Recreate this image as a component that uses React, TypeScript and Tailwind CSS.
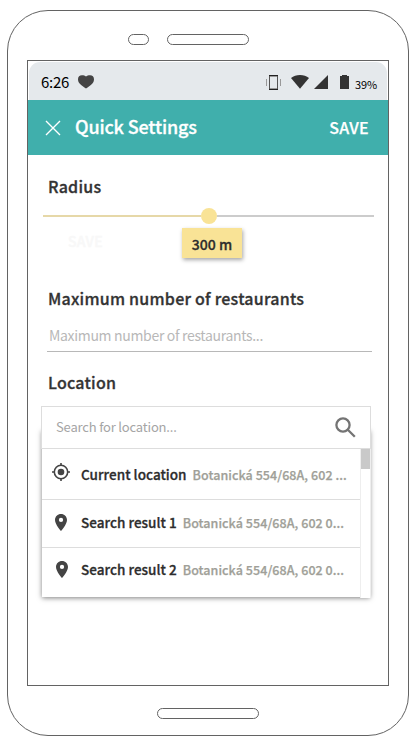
import type { ReactNode } from "react";

function Heart() {
  return (
    <svg className="block h-[14px] w-4" viewBox="0 0 16 14" fill="#444">
      <path d="M8 13.400C6 12.400 3.500 10.800 1.600 8.600.4 7.100 0 5.700 0 4.200 0 1.800 1.600.2 3.900.2 5.700.2 7 .7 8 1.500 9 .7 10.300.2 12.100.2 14.400.2 16 1.800 16 4.200c0 1.500-.4 2.900-1.600 4.400C12.500 10.800 10 12.400 8 13.400Z" />
    </svg>
  );
}

function StatusBar() {
  return (
    <div className="mx-px mt-px flex h-[38px] shrink-0 rounded-t-[11px] bg-[#e5e9ec] text-black">
      <span className="ml-3 mt-2 w-[37px] text-[15px] leading-6 tracking-[-0.3px]">6:26</span>
      <div className="mt-[13px]"><Heart /></div>
      <svg className="ml-[172px] mt-[13px] block h-4 w-[16px]" viewBox="0 0 16 16" fill="none">
        <path d="M.5 4v7M14.500 4v7" stroke="#999" />
        <path d="M3.500 1v14M11.500 1v14" stroke="#555" />
        <path d="M3 .5h9M3 14.500h9" stroke="#222" />
        <path d="M4 1.500h7M4 13.500h7" stroke="#999" />
      </svg>
      <svg className="ml-[9px] mt-[13px] block h-[14px] w-[18px]" viewBox="0 0 18 14" fill="#333">
        <path d="M9 13.800 0 3C2.400 1 5.600 0 9 0s6.600 1 9 3Z" />
      </svg>
      <svg className="ml-[5px] mt-[13px] block h-[14px] w-[14px]" viewBox="0 0 14 14" fill="#333"><path d="M0 14 14 0v14Z" /></svg>
      <svg className="ml-3 mt-[13px] block h-[14px] w-[9px]" viewBox="0 0 9 14" fill="#333"><path d="M2 0h5v1h2v13H0V1h2Z" /></svg>
      <span className="ml-1.5 mt-[14px] text-[11px] leading-4 tracking-[-0.1px]">39%</span>
    </div>
  );
}

function Pin() {
  return (
    <svg className="block h-[17px] w-3" viewBox="5 2 14 20" preserveAspectRatio="none" fill="#444">
      <path d="M12 2C8.130 2 5 5.130 5 9c0 5.250 7 13 7 13s7-7.750 7-13c0-3.870-3.130-7-7-7zm0 9.500a2.500 2.500 0 1 1 0-5 2.500 2.500 0 0 1 0 5z" />
    </svg>
  );
}

function Target() {
  return (
    <svg className="block h-[18px] w-[18px]" viewBox="0 0 18 18" fill="none" stroke="#444" strokeWidth="1.600">
      <circle cx="9" cy="9" r="6.700" />
      <path d="M9 0v3M9 15v3M0 9h3M15 9h3" />
      <circle cx="9" cy="9" r="3.300" fill="#444" stroke="none" />
    </svg>
  );
}

function SectionTitle({ children, className }: { children: ReactNode; className?: string }) {
  return (
    <h2 className={"ml-5 text-[16px] font-medium leading-6 tracking-[0.24px] text-[#333] [-webkit-text-stroke:0.3px_#333] " + (className ?? "")}>
      {children}
    </h2>
  );
}

function Row({ icon, title, address, className }: { icon: ReactNode; title: string; address: string; className: string }) {
  return (
    <div className={"flex " + className}>
      {icon}
      <div className="flex h-5 items-baseline leading-5">
        <span className="text-[13.5px] font-medium tracking-[0.04px] text-[#2d2d2d] [-webkit-text-stroke:0.3px_#2d2d2d]">{title}</span>
        <span className="ml-1.5 text-[12.5px] font-medium tracking-[0.06px] text-[#a09f98] [-webkit-text-stroke:0.25px_#a09f98]">{address}</span>
      </div>
    </div>
  );
}

export default function App() {
  return (
    <div className="h-[746px] w-[419px] overflow-hidden whitespace-nowrap bg-white pl-[7px] pt-2.5 font-['Noto_Sans_CJK_SC','Noto_Sans',sans-serif]">
      <div className="h-[726px] w-[402px] rounded-[41px] border border-[#636363]">
        <div className="flex pl-[120px] pt-[23px]">
          <div className="h-[11px] w-[21px] rounded-full border border-[#636363]" />
          <div className="ml-[18px] h-[11px] w-[82px] rounded-full border border-[#636363]" />
        </div>
        <div className="ml-[19px] mt-[15px] flex h-[626px] w-[362px] flex-col border border-[#636363]">
          <StatusBar />
          <header className="flex h-[55px] shrink-0 items-center bg-[#40afac] text-white">
            <svg className="ml-[17px] block h-4 w-4" viewBox="0 0 16 16" stroke="white" strokeWidth="1.400"><path d="m1 1 14 14M15 1 1 15" /></svg>
            <h1 className="mb-[3px] ml-3.5 text-[18px] font-medium leading-6 tracking-[-0.15px] [-webkit-text-stroke:0.3px_white]">Quick Settings</h1>
            <button className="mb-0.5 ml-auto mr-[19px] text-[16px] font-medium leading-6 tracking-[0.3px] [-webkit-text-stroke:0.25px_white]">SAVE</button>
          </header>
          <main>
            <SectionTitle className="mt-[19px]">Radius</SectionTitle>
            <div className="ml-[15px] mt-[10px] flex h-4 w-[331px] items-center">
              <div className="h-0.5 w-[158px] bg-[#e6d8a8]" />
              <div className="h-4 w-4 rounded-full bg-[#f9e396]" />
              <div className="h-0.5 flex-1 bg-[#ccc]" />
            </div>
            <div className="flex h-[62px]">
              <span className="ml-10 mt-[5px] w-[114px] text-[14px] font-medium leading-6 tracking-[0.3px] text-[#f8f8f8] [-webkit-text-stroke:0.35px_#f8f8f8]">SAVE</span>
              <div className="mt-1 h-[30px] w-[60px] bg-[#f9e396] pt-1 text-center text-[14px] font-medium leading-6 text-[#2d2d2d] shadow-[1px_2px_4px_rgba(0,0,0,0.35)] [-webkit-text-stroke:0.3px_#2d2d2d]">300 m</div>
            </div>
            <SectionTitle>Maximum number of restaurants</SectionTitle>
            <div className="ml-[19px] mt-[13px] h-[29px] w-[325px] border-b border-[#b8b8b8] pl-0.5 text-[14px] leading-6 tracking-[-0.32px] text-[#b8b8b8]">Maximum number of restaurants...</div>
            <SectionTitle className="mt-[18px]">Location</SectionTitle>
            <section className="relative ml-[13px] mt-[12px] h-[192px] w-[330px] bg-white">
              <div className="absolute bottom-px left-px right-px top-6 shadow-[0_1px_5px_rgba(0,0,0,0.5)]" />
              <div className="relative flex h-[43px] items-center border border-[#ddd] bg-white">
                <span className="mb-0.5 ml-3.5 text-[13px] leading-5 tracking-[-0.18px] text-[#a5a5a5]">Search for location...</span>
                <svg className="ml-auto mr-3.5 block h-[21px] w-[21px]" viewBox="0 0 21 21" fill="none" stroke="#747474" strokeWidth="2.300"><circle cx="8" cy="8" r="6.600" /><path d="m12.800 12.800 7 7" /></svg>
              </div>
              <div className="relative ml-px flex h-[149px]">
                <div className="h-[148px] flex-1 bg-white">
                  <Row className="h-[51px] border-b border-[#ddd] pl-2.5 pt-[15px]" icon={<div className="-mt-px mr-[11px]"><Target /></div>} title="Current location" address="Botanická 554/68A, 602 ..." />
                  <Row className="h-12 border-b border-[#ddd] pl-[13px] pt-3" icon={<div className="mr-3.5 mt-0.5"><Pin /></div>} title="Search result 1" address="Botanická 554/68A, 602 0..." />
                  <Row className="h-[49px] pl-3.5 pt-[11px]" icon={<div className="mr-[13px] mt-0.5"><Pin /></div>} title="Search result 2" address="Botanická 554/68A, 602 0..." />
                </div>
                <div className="w-[11px] border-x border-[#eee] bg-white"><div className="h-5 bg-[#c9c9c9]" /></div>
              </div>
            </section>
          </main>
        </div>
        <div className="ml-[149px] mt-[22px] h-[11px] w-[102px] rounded-full border border-[#636363]" />
      </div>
    </div>
  );
}
